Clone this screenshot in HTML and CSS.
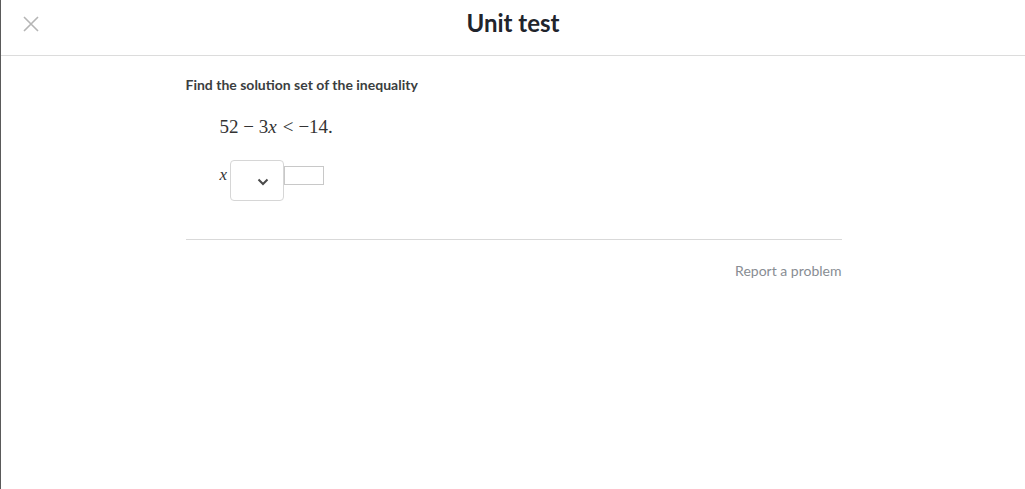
FILE: index.html
```html
<!DOCTYPE html>
<html>
<head>
<meta charset="utf-8">
<link rel="stylesheet" href="styles.css">
</head>
<body>
<div class="page">
  <header class="topbar">
    <button class="close" aria-label="Close">
      <svg width="16" height="16" viewBox="0 0 16 16"><path d="M1 1 L15 15 M15 1 L1 15" stroke="#b5b5b5" stroke-width="1.6" fill="none"/></svg>
    </button>
    <h1 class="title">Unit test</h1>
  </header>
  <main class="content">
    <p class="prompt">Find the solution set of the inequality</p>
    <div class="equation">52 − 3<i>x</i><span class="rel">&lt;</span>−14.</div>
    <div class="answer">
      <i class="var">x</i>
      <div class="select">
        <svg width="12" height="8" viewBox="0 0 12 8"><path d="M1.5 1.5 L6 6 L10.5 1.5" stroke="#4a4a4a" stroke-width="2" fill="none"/></svg>
      </div>
      <div class="input"></div>
    </div>
    <hr class="divider">
    <div class="footer"><span class="report">Report a problem</span></div>
  </main>
</div>
</body>
</html>
```
FILE: styles.css
```css
html, body {
  margin: 0;
  padding: 0;
  background: #fff;
}
body {
  font-family: Lato, "Noto Sans", sans-serif;
  color: #21242c;
}
.page {
  min-height: 489px;
  border-left: 1px solid #5a5a5a;
  box-sizing: border-box;
}
.topbar {
  position: relative;
  height: 55px;
  border-bottom: 1px solid #dcdcdc;
  display: flex;
  align-items: flex-start;
  justify-content: center;
}
.close {
  position: absolute;
  left: 22px;
  top: 16px;
  width: 16px;
  height: 16px;
  padding: 0;
  border: 0;
  background: none;
}
.close svg { display: block; }
.title {
  margin: 0;
  padding-top: 8px;
  font-size: 24px;
  font-weight: 700;
  line-height: 30px;
  color: #21242c;
}
.content {
  width: 656px;
  margin: 0 auto;
  padding-top: 19px;
  padding-left: 1px;
}
.prompt {
  margin: 0;
  font-size: 14px;
  font-weight: 700;
  line-height: 20px;
  color: #3b3e40;
}
.equation {
  margin: 20px 0 0 34px;
  font-family: "Liberation Serif", "DejaVu Serif", serif;
  font-size: 19px;
  line-height: 24px;
  color: #333;
}
.equation i {
  font-style: italic;
}
.rel {
  margin: 0 5px 0 6px;
}
.answer {
  margin: 21px 0 0 34px;
  display: flex;
  align-items: flex-start;
}
.var {
  font-family: "Liberation Serif", "DejaVu Serif", serif;
  font-size: 17px;
  line-height: 17px;
  margin-top: 6px;
  color: #333;
  width: 10px;
}
.select {
  width: 40px;
  height: 37px;
  border: 1px solid #d6d6d6;
  border-radius: 4px;
  display: flex;
  align-items: center;
  justify-content: center;
  padding-left: 12px;
  padding-top: 2px;
}
.select svg { display: block; }
.input {
  width: 38px;
  height: 17px;
  border: 1px solid #c8c8c8;
  margin-top: 6px;
}
.divider {
  margin: 38px 0 0 0;
  border: 0;
  border-top: 1px solid #d9d9d9;
  height: 0;
}
.footer {
  display: flex;
  justify-content: flex-end;
  padding-top: 21px;
}
.report {
  font-size: 14px;
  line-height: 20px;
  color: #888d93;
}
```
